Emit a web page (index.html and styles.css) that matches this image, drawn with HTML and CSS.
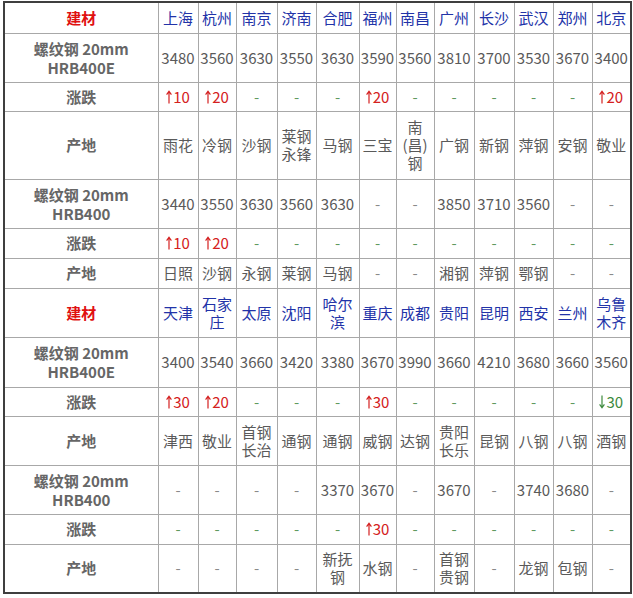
FILE: index.html
```html
<!DOCTYPE html>
<html lang="zh-CN">
<head>
<meta charset="utf-8">
<title>螺纹钢价格</title>
<link rel="stylesheet" href="styles.css">
</head>
<body>
<svg class="defs" width="0" height="0" aria-hidden="true">
  <symbol id="arr" viewBox="0 0 6 14">
    <path d="M3 13.5V1.6M0.6 4.6L3 1.2L5.4 4.6" fill="none" stroke="currentColor" stroke-width="1.2"/>
  </symbol>
</svg>
<table class="grid">
  <colgroup>
    <col class="c-label">
    <col class="w40"><col class="w38"><col class="w41"><col class="w39"><col class="w43"><col class="w37">
    <col class="w38"><col class="w40"><col class="w40"><col class="w39"><col class="w39"><col class="w39">
  </colgroup>
  <tbody>
    <tr class="h31">
      <td class="mat">建材</td>
      <td class="city">上海</td><td class="city">杭州</td><td class="city">南京</td><td class="city">济南</td><td class="city">合肥</td><td class="city">福州</td><td class="city">南昌</td><td class="city">广州</td><td class="city">长沙</td><td class="city">武汉</td><td class="city">郑州</td><td class="city">北京</td>
    </tr>
    <tr class="h49">
      <td class="label"><span class="ln">螺纹钢 20mm</span><span class="ln">HRB400E</span></td>
      <td>3480</td><td>3560</td><td>3630</td><td>3550</td><td>3630</td><td>3590</td><td>3560</td><td>3810</td><td>3700</td><td>3530</td><td>3670</td><td>3400</td>
    </tr>
    <tr class="h29">
      <td class="label">涨跌</td>
      <td class="up"><svg class="arrow"><use href="#arr"/></svg>10</td><td class="up"><svg class="arrow"><use href="#arr"/></svg>20</td><td class="flat">-</td><td class="flat">-</td><td class="flat">-</td><td class="up"><svg class="arrow"><use href="#arr"/></svg>20</td><td class="flat">-</td><td class="flat">-</td><td class="flat">-</td><td class="flat">-</td><td class="flat">-</td><td class="up"><svg class="arrow"><use href="#arr"/></svg>20</td>
    </tr>
    <tr class="h68">
      <td class="label">产地</td>
      <td>雨花</td><td>冷钢</td><td>沙钢</td><td>莱钢永锋</td><td>马钢</td><td>三宝</td><td>南(昌)钢</td><td>广钢</td><td>新钢</td><td>萍钢</td><td>安钢</td><td>敬业</td>
    </tr>
    <tr class="h49">
      <td class="label"><span class="ln">螺纹钢 20mm</span><span class="ln">HRB400</span></td>
      <td>3440</td><td>3550</td><td>3630</td><td>3560</td><td>3630</td><td class="nil">-</td><td class="nil">-</td><td>3850</td><td>3710</td><td>3560</td><td class="nil">-</td><td class="nil">-</td>
    </tr>
    <tr class="h30">
      <td class="label">涨跌</td>
      <td class="up"><svg class="arrow"><use href="#arr"/></svg>10</td><td class="up"><svg class="arrow"><use href="#arr"/></svg>20</td><td class="flat">-</td><td class="flat">-</td><td class="flat">-</td><td class="flat">-</td><td class="flat">-</td><td class="flat">-</td><td class="flat">-</td><td class="flat">-</td><td class="flat">-</td><td class="flat">-</td>
    </tr>
    <tr class="h30">
      <td class="label">产地</td>
      <td>日照</td><td>沙钢</td><td>永钢</td><td>莱钢</td><td>马钢</td><td class="nil">-</td><td class="nil">-</td><td>湘钢</td><td>萍钢</td><td>鄂钢</td><td class="nil">-</td><td class="nil">-</td>
    </tr>
    <tr class="h49">
      <td class="mat">建材</td>
      <td class="city">天津</td><td class="city">石家庄</td><td class="city">太原</td><td class="city">沈阳</td><td class="city">哈尔滨</td><td class="city">重庆</td><td class="city">成都</td><td class="city">贵阳</td><td class="city">昆明</td><td class="city">西安</td><td class="city">兰州</td><td class="city">乌鲁木齐</td>
    </tr>
    <tr class="h50">
      <td class="label"><span class="ln">螺纹钢 20mm</span><span class="ln">HRB400E</span></td>
      <td>3400</td><td>3540</td><td>3660</td><td>3420</td><td>3380</td><td>3670</td><td>3990</td><td>3660</td><td>4210</td><td>3680</td><td>3660</td><td>3560</td>
    </tr>
    <tr class="h29">
      <td class="label">涨跌</td>
      <td class="up"><svg class="arrow"><use href="#arr"/></svg>30</td><td class="up"><svg class="arrow"><use href="#arr"/></svg>20</td><td class="flat">-</td><td class="flat">-</td><td class="flat">-</td><td class="up"><svg class="arrow"><use href="#arr"/></svg>30</td><td class="flat">-</td><td class="flat">-</td><td class="flat">-</td><td class="flat">-</td><td class="flat">-</td><td class="down"><svg class="arrow flip"><use href="#arr"/></svg>30</td>
    </tr>
    <tr class="h49">
      <td class="label">产地</td>
      <td>津西</td><td>敬业</td><td>首钢长治</td><td>通钢</td><td>通钢</td><td>威钢</td><td>达钢</td><td>贵阳长乐</td><td>昆钢</td><td>八钢</td><td>八钢</td><td>酒钢</td>
    </tr>
    <tr class="h49">
      <td class="label"><span class="ln">螺纹钢 20mm</span><span class="ln">HRB400</span></td>
      <td class="nil">-</td><td class="nil">-</td><td class="nil">-</td><td class="nil">-</td><td>3370</td><td>3670</td><td class="nil">-</td><td>3670</td><td class="nil">-</td><td>3740</td><td>3680</td><td class="nil">-</td>
    </tr>
    <tr class="h30">
      <td class="label">涨跌</td>
      <td class="flat">-</td><td class="flat">-</td><td class="flat">-</td><td class="flat">-</td><td class="flat">-</td><td class="up"><svg class="arrow"><use href="#arr"/></svg>30</td><td class="flat">-</td><td class="flat">-</td><td class="flat">-</td><td class="flat">-</td><td class="flat">-</td><td class="flat">-</td>
    </tr>
    <tr class="h49">
      <td class="label">产地</td>
      <td class="nil">-</td><td class="nil">-</td><td class="nil">-</td><td class="nil">-</td><td>新抚钢</td><td>水钢</td><td class="nil">-</td><td>首钢贵钢</td><td class="nil">-</td><td>龙钢</td><td>包钢</td><td class="nil">-</td>
    </tr>
  </tbody>
</table>
</body>
</html>
```

FILE: styles.css
```css
html, body {
  margin: 0;
  padding: 0;
  background: #ffffff;
}

body {
  font-family: "Noto Sans CJK SC", "Noto Sans", sans-serif;
}

.defs {
  position: absolute;
  width: 0;
  height: 0;
  overflow: hidden;
}

.grid {
  border-collapse: collapse;
  table-layout: fixed;
  width: 628px;
  margin: 1px 0 0 3px;
  border: 2px solid #3f3f3f;
  font-size: 15px;
  line-height: 18px;
  color: #5a5a5a;
}

.grid td {
  border: 1px solid #a8a8a8;
  padding: 0 1px;
  text-align: center;
  vertical-align: middle;
  word-break: break-all;
}

.c-label { width: 154px; }
.w37 { width: 37px; }
.w38 { width: 38px; }
.w39 { width: 39px; }
.w40 { width: 40px; }
.w41 { width: 41px; }
.w43 { width: 43px; }

.h29 { height: 29px; }
.h30 { height: 30px; }
.h31 { height: 31px; }
.h49 { height: 49px; }
.h50 { height: 50px; }
.h68 { height: 68px; }

.grid td.label {
  font-weight: bold;
  color: #666666;
  padding: 0 4px;
}

.ln {
  display: block;
  line-height: 19px;
}

.grid td.mat {
  font-weight: bold;
  color: #e01010;
}

.city { color: #2233a8; }
.up { color: #d42020; }
.down { color: #3d8a3d; }
.flat { color: #5f9a5f; }
.nil { color: #8a8a8a; }

.arrow {
  display: inline-block;
  width: 6px;
  height: 14px;
  vertical-align: -1px;
  margin-right: 1px;
}

.arrow.flip {
  transform: rotate(180deg);
}
```
